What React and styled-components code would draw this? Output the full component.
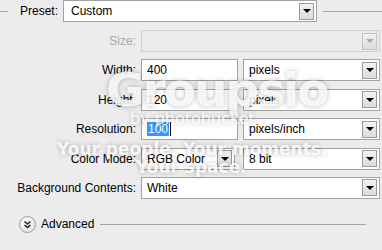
import React from "react";
import styled, { createGlobalStyle } from "styled-components";

const GlobalStyle = createGlobalStyle`
  html, body {
    margin: 0;
    padding: 0;
    background: #ececec;
  }
  body {
    font-family: "Liberation Sans", Arial, sans-serif;
    font-size: 12px;
    color: #000;
  }
`;

const Dialog = styled.div`
  position: relative;
  width: 382px;
  height: 250px;
  overflow: hidden;
  background: #ececec;
`;

const PresetRow = styled.div`
  display: flex;
  align-items: center;
  height: 22px;
`;

const Rule = styled.div`
  height: 1px;
  background: #a3a3a3;
  flex: ${(p) => (p.$grow ? 1 : "none")};
  width: ${(p) => (p.$w ? `${p.$w}px` : "auto")};
  margin-left: ${(p) => p.$ml || 0}px;
`;

const Fields = styled.div`
  display: grid;
  grid-template-columns: 136px 97px 137px;
  grid-auto-rows: 22px;
  column-gap: 5px;
  row-gap: 7.4px;
  margin-top: 8px;
  align-items: center;
`;

const Label = styled.span`
  text-align: right;
  white-space: nowrap;
  color: ${(p) => (p.$disabled ? "#a8a8a8" : "#000")};
  margin-left: ${(p) => p.$ml || 0}px;
  margin-right: ${(p) => p.$mr || 0}px;
`;

const Box = styled.div`
  box-sizing: border-box;
  height: 22px;
  width: ${(p) => (p.$w ? `${p.$w}px` : "auto")};
  grid-column: ${(p) => p.$span || "auto"};
  display: flex;
  align-items: center;
  padding: 0 2px 0 ${(p) => p.$pl || 5}px;
  border: 1px solid ${(p) => (p.$disabled ? "#cfcfcf" : "#a2a2a2")};
  background: ${(p) => (p.$disabled ? "#ebebeb" : "#fff")};
  white-space: nowrap;
`;

const Value = styled.span`
  flex: 1;
  overflow: hidden;
`;

const Selected = styled.span`
  background: #3399ff;
  color: #fff;
  padding: 0 1px;
`;

const Caret = styled.span`
  display: inline-block;
  width: 1px;
  height: 14px;
  background: #000;
  vertical-align: middle;
  margin-left: 1px;
`;

const DropButton = styled.span`
  box-sizing: border-box;
  width: 15px;
  height: 17px;
  flex: none;
  display: flex;
  align-items: center;
  justify-content: center;
  border: 1px solid ${(p) => (p.$disabled ? "#c4c4c4" : "#9a9a9a")};
  background: linear-gradient(#f2f2f2, #dcdcdc);
  &::after {
    content: "";
    border-left: 4px solid transparent;
    border-right: 4px solid transparent;
    border-top: 4px solid ${(p) => (p.$disabled ? "#a8a8a8" : "#000")};
  }
`;

const AdvancedRow = styled.div`
  display: flex;
  align-items: center;
  margin-top: 17px;
  padding-left: 19px;
  padding-right: 16px;
`;

const Toggle = styled.span`
  box-sizing: border-box;
  width: 17px;
  height: 17px;
  border-radius: 50%;
  border: 1px solid #9c9c9c;
  background: radial-gradient(circle at 40% 35%, #ffffff, #dadada);
  display: flex;
  align-items: center;
  justify-content: center;
  margin-right: 5px;
`;

/* photobucket watermark laid over the dialog */
const Watermark = styled.div`
  position: absolute;
  inset: 0;
  pointer-events: none;
  color: rgba(255, 255, 255, 0.85);
  text-shadow: 0 0 5px rgba(0, 0, 0, 0.28);
  font-family: "DejaVu Sans", Verdana, sans-serif;
  font-weight: bold;
`;

const Brand = styled.div`
  position: absolute;
  left: 106px;
  top: 62px;
  font-size: 47px;
  letter-spacing: -2px;
`;

const Byline = styled.div`
  position: absolute;
  left: 130px;
  top: 109px;
  font-size: 16px;
  font-weight: normal;
`;

const Tagline = styled.div`
  position: absolute;
  left: ${(p) => p.$x}px;
  top: ${(p) => p.$y}px;
  font-size: 17px;
  white-space: nowrap;
`;

const Dropdown = ({ children, w, span, disabled, pl }) => (
  <Box $w={w} $span={span} $disabled={disabled} $pl={pl}>
    <Value>{children}</Value>
    <DropButton $disabled={disabled} />
  </Box>
);

export default function App() {
  return (
    <>
      <GlobalStyle />
      <Dialog>
        <PresetRow>
          <Rule $w={8} />
          <Label $ml={12} $mr={5}>Preset:</Label>
          <Dropdown w={254} pl={7}>Custom</Dropdown>
          <Rule $grow $ml={6} />
        </PresetRow>

        <Fields>
          <Label $disabled>Size:</Label>
          <Dropdown span="2 / 4" disabled>{""}</Dropdown>

          <Label>Width:</Label>
          <Box>400</Box>
          <Dropdown>pixels</Dropdown>

          <Label>Height:</Label>
          <Box>120</Box>
          <Dropdown>pixels</Dropdown>

          <Label>Resolution:</Label>
          <Box>
            <Selected>100</Selected>
            <Caret />
          </Box>
          <Dropdown>pixels/inch</Dropdown>

          <Label>Color Mode:</Label>
          <Dropdown w={94}>RGB Color</Dropdown>
          <Dropdown>8 bit</Dropdown>

          <Label>Background Contents:</Label>
          <Dropdown span="2 / 4">White</Dropdown>
        </Fields>

        <AdvancedRow>
          <Toggle>
            <svg width="9" height="9" viewBox="0 0 9 9">
              <path
                d="M1.5 1.5 L4.5 4 L7.5 1.5 M1.5 5 L4.5 7.5 L7.5 5"
                fill="none"
                stroke="#222"
                strokeWidth="1.6"
              />
            </svg>
          </Toggle>
          <span>Advanced</span>
          <Rule $grow $ml={6} />
        </AdvancedRow>

        <Watermark>
          <Brand>Groupsio</Brand>
          <Byline>by photobucket</Byline>
          <Tagline $x={57} $y={139}>Your people. Your moments.</Tagline>
          <Tagline $x={136} $y={157}>Your space.</Tagline>
        </Watermark>
      </Dialog>
    </>
  );
}
